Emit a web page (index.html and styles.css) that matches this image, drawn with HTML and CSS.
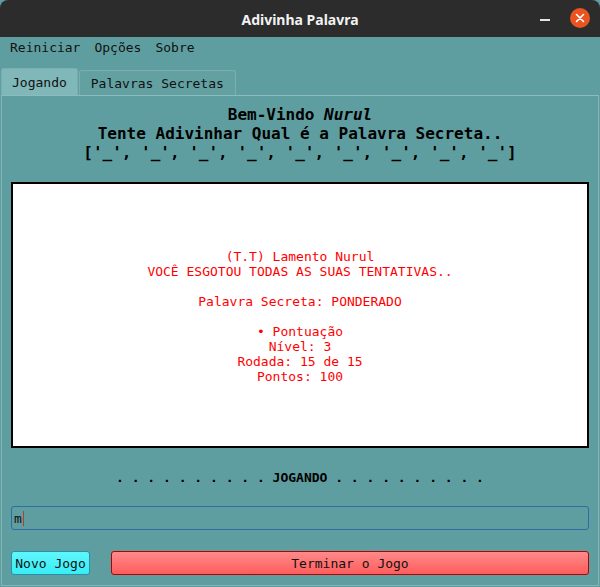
FILE: index.html
```
<!DOCTYPE html>
<html lang="pt">
<head>
<meta charset="utf-8">
<title>Adivinha Palavra</title>
<link rel="stylesheet" href="styles.css">
</head>
<body>
<div class="window">
  <header class="titlebar">
    <span class="title">Adivinha Palavra</span>
    <div class="controls">
      <span class="minimize"></span>
      <span class="close">
        <svg width="20" height="20" viewBox="0 0 20 20"><circle cx="10" cy="10" r="10" fill="#e95420"/><path d="M6.5 6.5 L13.5 13.5 M13.5 6.5 L6.5 13.5" stroke="#fff" stroke-width="1.6" stroke-linecap="round"/></svg>
      </span>
    </div>
  </header>
  <nav class="menubar">
    <span class="menu-item">Reiniciar</span>
    <span class="menu-item">Opções</span>
    <span class="menu-item">Sobre</span>
  </nav>
  <div class="tabs">
    <div class="tab active">Jogando</div>
    <div class="tab">Palavras Secretas</div>
  </div>
  <main class="pane">
    <div class="heading">
      <div>Bem-Vindo <em>Nurul</em></div>
      <div>Tente Adivinhar Qual é a Palavra Secreta..</div>
      <div>['_', '_', '_', '_', '_', '_', '_', '_', '_']</div>
    </div>
    <div class="board">
      <div class="message">
        <div>(T.T) Lamento Nurul</div>
        <div>VOCÊ ESGOTOU TODAS AS SUAS TENTATIVAS..</div>
        <div>&nbsp;</div>
        <div>Palavra Secreta: PONDERADO</div>
        <div>&nbsp;</div>
        <div>• Pontuação</div>
        <div>Nível: 3</div>
        <div>Rodada: 15 de 15</div>
        <div>Pontos: 100</div>
      </div>
    </div>
    <div class="status">. . . . . . . . . . JOGANDO . . . . . . . . . .</div>
    <div class="entry"><span class="typed">m</span><span class="caret"></span></div>
    <div class="buttons">
      <button class="btn btn-new">Novo Jogo</button>
      <button class="btn btn-end">Terminar o Jogo</button>
    </div>
  </main>
</div>
</body>
</html>
```

FILE: styles.css
```
* { box-sizing: border-box; }
html, body { margin: 0; padding: 0; }
body {
  width: 600px;
  height: 587px;
  background: #5f9ea0;
  font-family: "DejaVu Sans Mono", monospace;
  overflow: hidden;
}
.window {
  width: 600px;
  height: 587px;
  display: flex;
  flex-direction: column;
  background: #5f9ea0;
}
.titlebar {
  height: 37px;
  background: #2c2c2c;
  border-radius: 8px 8px 0 0;
  display: flex;
  align-items: center;
  justify-content: center;
  position: relative;
}
.title {
  color: #f2f2f2;
  font-family: "Noto Sans", "DejaVu Sans", sans-serif;
  font-weight: bold;
  font-size: 14px;
  padding-top: 1px;
}
.controls {
  position: absolute;
  right: 10px;
  top: 8px;
  display: flex;
  align-items: center;
  gap: 20px;
}
.minimize {
  width: 10px;
  height: 2px;
  background: #e6e6e6;
  margin-top: 4px;
}
.close { width: 20px; height: 20px; display: block; }
.close svg { display: block; }
.menubar {
  height: 21px;
  display: flex;
  align-items: center;
  padding-left: 10px;
  gap: 14px;
  font-size: 13px;
  color: #111;
}
.tabs {
  display: flex;
  align-items: flex-end;
  height: 37px;
  padding-left: 1px;
  gap: 1px;
}
.tab {
  font-size: 13px;
  color: #111;
  border: 1px solid #7aaeb0;
  border-bottom: none;
  border-radius: 3px 3px 0 0;
  height: 25px;
  padding: 0 11px;
  display: flex;
  align-items: center;
  background: #62a0a2;
}
.tab.active {
  background: #80b7b9;
  height: 27px;
  padding: 0 10px;
}
.pane {
  flex: 1;
  border: 1px solid #82b4b6;
  border-top-color: #8cbcbe;
  margin: 0 1px 1px 1px;
  display: flex;
  flex-direction: column;
  padding: 0 9px;
}
.heading {
  text-align: center;
  font-weight: bold;
  font-size: 16px;
  line-height: 19px;
  color: #000;
  margin-top: 9px;
}
.heading em { font-style: italic; }
.board {
  margin-top: 20px;
  height: 266px;
  background: #fff;
  border: 2px solid #000;
  display: flex;
  align-items: center;
  justify-content: center;
}
.message {
  text-align: center;
  color: #ff0000;
  font-size: 13px;
  line-height: 15px;
  margin-top: 2px;
}
.status {
  margin-top: 22px;
  text-align: center;
  font-weight: bold;
  font-size: 13px;
  line-height: 15px;
  color: #000;
}
.entry {
  margin-top: 21px;
  height: 24px;
  border: 1px solid #2d6da3;
  border-radius: 3px;
  display: flex;
  align-items: center;
  padding-left: 2px;
  font-size: 13px;
  color: #111;
}
.caret {
  width: 1px;
  height: 15px;
  background: #c0392b;
  margin-left: 1px;
}
.buttons {
  margin-top: 21px;
  display: flex;
  gap: 21px;
}
.btn {
  height: 24px;
  font-family: "DejaVu Sans Mono", monospace;
  font-size: 13px;
  color: #111;
  border-radius: 3px;
  padding: 0;
}
.btn-new {
  width: 79px;
  background: linear-gradient(#5ff6fb, #37eef6);
  border: 1px solid #2b8fa8;
}
.btn-end {
  flex: 1;
  background: linear-gradient(#ff8a8a, #ff5c5c);
  border: 1px solid #b30000;
}
```
